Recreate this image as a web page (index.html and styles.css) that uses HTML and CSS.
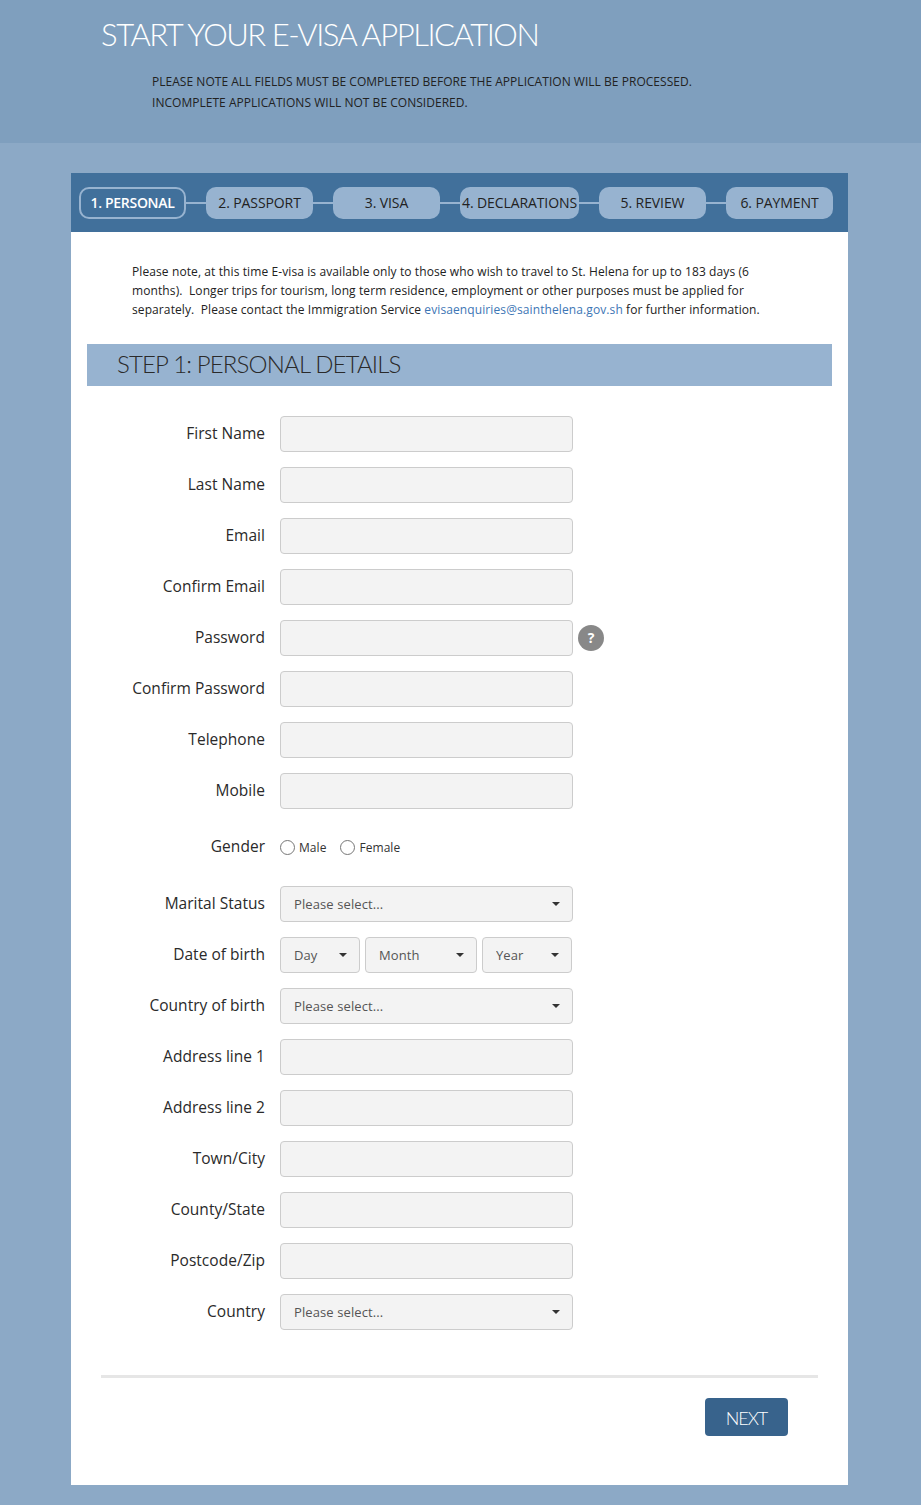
FILE: index.html
```html
<!DOCTYPE html>
<html lang="en">
<head>
<meta charset="utf-8">
<title>Start your e-visa application</title>
<link rel="stylesheet" href="styles.css">
</head>
<body>
<header class="hero">
  <h1>START YOUR E-VISA APPLICATION</h1>
  <p>PLEASE NOTE ALL FIELDS MUST BE COMPLETED BEFORE THE APPLICATION WILL BE PROCESSED.<br>INCOMPLETE APPLICATIONS WILL NOT BE CONSIDERED.</p>
</header>
<main class="card">
  <nav class="steps">
    <span class="step active">1. PERSONAL</span><i class="link"></i>
    <span class="step">2. PASSPORT</span><i class="link"></i>
    <span class="step">3. VISA</span><i class="link"></i>
    <span class="step wide">4. DECLARATIONS</span><i class="link"></i>
    <span class="step">5. REVIEW</span><i class="link"></i>
    <span class="step">6. PAYMENT</span>
  </nav>
  <div class="content">
    <p class="note">Please note, at this time E-visa is available only to those who wish to travel to St. Helena for up to 183 days (6<br>months).&nbsp; Longer trips for tourism, long term residence, employment or other purposes must be applied for<br>separately.&nbsp; Please contact the Immigration Service <a href="#">evisaenquiries@sainthelena.gov.sh</a> for further information.</p>
    <h2>STEP 1: PERSONAL DETAILS</h2>
    <form class="form">
      <div class="row"><label>First Name</label><input type="text"></div>
      <div class="row"><label>Last Name</label><input type="text"></div>
      <div class="row"><label>Email</label><input type="text"></div>
      <div class="row"><label>Confirm Email</label><input type="text"></div>
      <div class="row"><label>Password</label><input type="password"><span class="help">?</span></div>
      <div class="row"><label>Confirm Password</label><input type="password"></div>
      <div class="row"><label>Telephone</label><input type="text"></div>
      <div class="row"><label>Mobile</label><input type="text"></div>
      <div class="row gender"><label>Gender</label>
        <span class="radio"><input type="radio" name="g">Male</span>
        <span class="radio"><input type="radio" name="g">Female</span>
      </div>
      <div class="row"><label>Marital Status</label><span class="sel full"><select><option>Please select...</option></select></span></div>
      <div class="row"><label>Date of birth</label>
        <span class="dob">
          <span class="sel day"><select><option>Day</option></select></span>
          <span class="sel month"><select><option>Month</option></select></span>
          <span class="sel year"><select><option>Year</option></select></span>
        </span>
      </div>
      <div class="row"><label>Country of birth</label><span class="sel full"><select><option>Please select...</option></select></span></div>
      <div class="row"><label>Address line 1</label><input type="text"></div>
      <div class="row"><label>Address line 2</label><input type="text"></div>
      <div class="row"><label>Town/City</label><input type="text"></div>
      <div class="row"><label>County/State</label><input type="text"></div>
      <div class="row"><label>Postcode/Zip</label><input type="text"></div>
      <div class="row"><label>Country</label><span class="sel full"><select><option>Please select...</option></select></span></div>
    </form>
    <hr class="rule">
    <div class="actions"><button type="button" class="next">NEXT</button></div>
  </div>
</main>
</body>
</html>
```
FILE: styles.css
```css
* { box-sizing: border-box; }
html, body { margin: 0; padding: 0; }
body {
  background: #8ca9c6;
  font-family: "Open Sans", "Noto Sans", sans-serif;
  color: #222;
  height: 1505px;
  overflow: hidden;
}
.hero {
  height: 143px;
  background: #7f9fbe;
  padding: 14px 0 0 101px;
}
.hero h1 {
  margin: 0;
  font: 300 31px/40px Lato, sans-serif;
  color: #fff;
  letter-spacing: -1.45px;
}
.hero p {
  margin: 17px 0 0 51px;
  font-size: 12px;
  line-height: 21px;
  letter-spacing: 0.03px;
  color: #222;
}
.card {
  width: 777px;
  height: 1312px;
  margin: 30px 0 0 71px;
  background: #fff;
}
.steps {
  height: 59px;
  background: #41709b;
  padding: 14px 15px 0 8px;
  display: flex;
  align-items: flex-start;
}
.step {
  flex: none;
  width: 107px;
  height: 32px;
  border-radius: 10px;
  background: #97b3d0;
  color: #222;
  font-size: 14px;
  line-height: 32px;
  text-align: center;
  letter-spacing: -0.1px;
  white-space: nowrap;
}
.step.wide { width: 119px; }
.step.active {
  background: #41709b;
  border: 2px solid #97b3d0;
  color: #fff;
  line-height: 28px;
  font-weight: 600;
  letter-spacing: -0.3px;
}
.link {
  flex: none;
  width: 20px;
  height: 2px;
  margin-top: 15px;
  background: #97b3d0;
}
.content { padding: 0 16px; }
.note {
  margin: 0;
  padding: 30px 0 0 45px;
  font-size: 12px;
  line-height: 19px;
  letter-spacing: 0.1px;
  height: 112px;
  color: #222;
}
.note a { color: #3d76b5; text-decoration: none; }
h2 {
  margin: 0;
  height: 42px;
  background: #97b3d0;
  padding-left: 30px;
  font: 300 24px/40px Lato, sans-serif;
  letter-spacing: -0.85px;
  color: #2a2a2a;
}
.form { padding-top: 30px; }
.row {
  display: flex;
  align-items: center;
  min-height: 36px;
  margin-bottom: 15px;
}
.row label {
  flex: none;
  width: 178px;
  margin-right: 15px;
  text-align: right;
  font-size: 15.5px;
  letter-spacing: 0.03px;
  color: #2a2a2a;
  position: relative;
  top: -1px;
}
.row input[type=text], .row input[type=password] {
  flex: none;
  width: 293px;
  height: 36px;
  background: #f3f3f3;
  border: 1px solid #ccc;
  border-radius: 4px;
}
.help {
  flex: none;
  width: 26px;
  height: 26px;
  margin-left: 5px;
  border-radius: 50%;
  background: #888;
  color: #fff;
  font-size: 14px;
  font-weight: 700;
  line-height: 26px;
  text-align: center;
}
.gender { height: 47px; }
.gender label { top: -2px; }
.radio {
  display: inline-flex;
  align-items: center;
  font-size: 12px;
  letter-spacing: 0.05px;
  margin-right: 14px;
  color: #333;
}
.radio input {
  width: 15px;
  height: 15px;
  margin: 0 4px 0 0;
}
.sel {
  position: relative;
  display: block;
  flex: none;
  height: 36px;
}
.sel::after {
  content: "";
  position: absolute;
  right: 13px;
  top: 16px;
  border-left: 4px solid transparent;
  border-right: 4px solid transparent;
  border-top: 4px solid #333;
  pointer-events: none;
}
.sel select {
  width: 100%;
  height: 36px;
  appearance: none;
  background: #f3f3f3;
  border: 1px solid #ccc;
  border-radius: 4px;
  padding: 0 12px 0 13px;
  font: 13px "Open Sans", sans-serif;
  letter-spacing: 0.1px;
  color: #555;
}
.full { width: 293px; }
.dob { display: flex; gap: 5px; }
.day { width: 80px; }
.month { width: 112px; }
.year { width: 90px; }
.rule {
  margin: 45px 14px 0;
  border: 0;
  height: 3px;
  background: #e6e6e6;
}
.actions { display: flex; justify-content: flex-end; padding: 20px 44px 0 0; }
.next {
  width: 83px;
  height: 38px;
  background: #38638c;
  border: 0;
  border-radius: 4px;
  color: #fff;
  font: 300 18px/38px Lato, sans-serif;
  letter-spacing: -1.1px;
}
```
